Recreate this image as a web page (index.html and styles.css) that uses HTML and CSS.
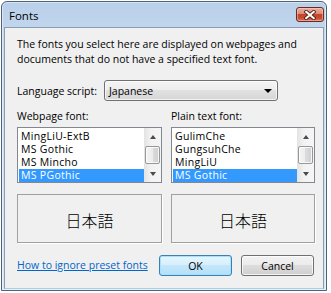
FILE: index.html
```html
<!DOCTYPE html>
<html lang="en">
<head>
<meta charset="utf-8">
<title>Fonts</title>
<link rel="stylesheet" href="styles.css">
</head>
<body>
<div class="window">
  <div class="titlebar">
    <span class="title">Fonts</span>
    <button class="close" aria-label="Close">
      <svg width="12" height="10" viewBox="0 0 12 10">
        <path d="M2.2 1.8 L9.8 8.2 M9.8 1.8 L2.2 8.2" stroke="#5a2018" stroke-width="3.8" stroke-linecap="square"/>
        <path d="M2.2 1.8 L9.8 8.2 M9.8 1.8 L2.2 8.2" stroke="#ffffff" stroke-width="2" stroke-linecap="square"/>
      </svg>
    </button>
  </div>
  <div class="client">
    <p class="intro">The fonts you select here are displayed on webpages and<br>documents that do not have a specified text font.</p>
    <div class="lang-row">
      <span class="lang-label">Language script:</span>
      <div class="combo"><span>Japanese</span><span class="combo-arrow"></span></div>
    </div>
    <div class="columns">
      <div class="col">
        <div class="col-label">Webpage font:</div>
        <div class="listbox">
          <ul class="items">
            <li>MingLiU-ExtB</li>
            <li>MS Gothic</li>
            <li>MS Mincho</li>
            <li class="selected">MS PGothic</li>
          </ul>
          <div class="scrollbar">
            <div class="sb-btn"><span class="arrow-up"></span></div>
            <div class="sb-track"><div class="sb-thumb"></div></div>
            <div class="sb-btn"><span class="arrow-down"></span></div>
          </div>
        </div>
        <div class="preview">日本語</div>
      </div>
      <div class="col">
        <div class="col-label">Plain text font:</div>
        <div class="listbox">
          <ul class="items">
            <li>GulimChe</li>
            <li>GungsuhChe</li>
            <li>MingLiU</li>
            <li class="selected">MS Gothic</li>
          </ul>
          <div class="scrollbar">
            <div class="sb-btn"><span class="arrow-up"></span></div>
            <div class="sb-track"><div class="sb-thumb"></div></div>
            <div class="sb-btn"><span class="arrow-down"></span></div>
          </div>
        </div>
        <div class="preview">日本語</div>
      </div>
    </div>
    <div class="actions">
      <a class="help-link" href="#">How to ignore preset fonts</a>
      <button class="btn btn-default">OK</button>
      <button class="btn btn-cancel">Cancel</button>
    </div>
  </div>
</div>
</body>
</html>
```

FILE: styles.css
```css
* { box-sizing: border-box; }
html, body { margin: 0; padding: 0; }
body {
  width: 331px;
  height: 293px;
  overflow: hidden;
  background: #ffffff;
  font-family: "Open Sans", "Noto Sans", sans-serif;
  font-size: 10.5px;
  color: #000;
}
.window {
  width: 326px;
  height: 290px;
  margin: 1px 0 0 1px;
  border: 1px solid #4e6278;
  border-radius: 6px 6px 0 0;
  background: linear-gradient(#b9d0ea 0%, #c4d8ee 12%, #cfe0f2 60%, #d6e6f5 100%);
  padding: 0 2px 1px 2px;
  display: flex;
  flex-direction: column;
  box-shadow: inset 0 0 0 1px rgba(255,255,255,0.45);
}
.titlebar {
  height: 25px;
  flex: none;
  display: flex;
  justify-content: space-between;
  align-items: flex-start;
}
.title {
  font-size: 11.5px;
  line-height: 16px;
  margin: 6px 0 0 5px;
  color: #000;
}
.close {
  width: 28px;
  height: 15px;
  margin-top: 5px;
  padding: 0;
  border: 1px solid #6a2a20;
  border-radius: 3px;
  background: linear-gradient(#eab0a2 0%, #dc8a76 45%, #c7432c 50%, #c44a30 75%, #d9785a 100%);
  box-shadow: inset 0 0 0 1px rgba(255,220,210,0.45);
  display: flex;
  align-items: center;
  justify-content: center;
}
.close svg { display: block; }
.client {
  flex: 1;
  background: #f0f0f0;
  border: 1px solid #8a9db3;
  border-bottom-color: #a9cfe3;
  padding: 9px 8px 12px 12px;
  display: flex;
  flex-direction: column;
}
.intro {
  margin: 0;
  line-height: 15px;
}
.lang-row {
  margin-top: 13px;
  height: 21px;
  display: flex;
  align-items: center;
}
.lang-label {
  width: 87px;
  flex: none;
}
.combo {
  width: 174px;
  height: 21px;
  border: 1px solid #707070;
  border-radius: 3px;
  background: linear-gradient(#f4f4f4 0%, #ededed 50%, #e1e1e1 50%, #d6d6d6 100%);
  box-shadow: inset 0 0 0 1px rgba(255,255,255,0.7);
  display: flex;
  align-items: center;
  justify-content: space-between;
  padding: 0 5px 0 4px;
}
.combo-arrow {
  width: 0;
  height: 0;
  border-left: 4px solid transparent;
  border-right: 4px solid transparent;
  border-top: 4px solid #000;
}
.columns {
  margin-top: 8px;
  display: grid;
  grid-template-columns: 145px 144px;
  column-gap: 9px;
}
.col-label {
  height: 15px;
  line-height: 15px;
}
.listbox {
  margin-top: 3px;
  height: 56px;
  border: 1px solid #828790;
  background: #fff;
  display: flex;
}
.items {
  list-style: none;
  margin: 0;
  padding: 2px 0 0 0;
  flex: 1;
  overflow: hidden;
  letter-spacing: 0.3px;
}
.items li {
  height: 13px;
  line-height: 13px;
  margin-left: 1px;
  padding-left: 2px;
  white-space: nowrap;
}
.items li.selected {
  background: #3399ff;
  color: #fff;
}
.scrollbar {
  width: 17px;
  flex: none;
  display: flex;
  flex-direction: column;
  background: linear-gradient(to right, #e3e3e3, #f2f2f2 40%, #f5f5f5);
}
.sb-btn {
  height: 17px;
  flex: none;
  display: flex;
  align-items: center;
  justify-content: center;
}
.arrow-up, .arrow-down {
  width: 0;
  height: 0;
  border-left: 3.5px solid transparent;
  border-right: 3.5px solid transparent;
}
.arrow-up { border-bottom: 4px solid #4a4a4a; }
.arrow-down { border-top: 4px solid #4a4a4a; }
.sb-track {
  flex: 1;
  padding: 1px 1px;
  display: flex;
}
.sb-thumb {
  flex: 1;
  border: 1px solid #979797;
  border-radius: 2px;
  background: linear-gradient(to right, #f4f4f4, #ececec 50%, #dcdcdc 50%, #cfcfcf);
  box-shadow: inset 0 0 0 1px rgba(255,255,255,0.8);
}
.preview {
  margin-top: 11px;
  height: 49px;
  border: 1px solid #a0a0a0;
  box-shadow: 1px 1px 0 #ffffff;
  display: flex;
  align-items: center;
  justify-content: center;
  padding-top: 2px;
  font-family: "Noto Sans CJK JP", "Noto Sans CJK SC", sans-serif;
  font-size: 16px;
  font-weight: 300;
}
.actions {
  margin-top: 12px;
  height: 21px;
  display: flex;
  align-items: center;
}
.help-link {
  flex: 1;
  color: #0066cc;
  text-decoration: underline;
  line-height: 15px;
}
.btn {
  width: 73px;
  height: 21px;
  flex: none;
  padding: 0;
  font: inherit;
  color: #000;
  border: 1px solid #707070;
  border-radius: 3px;
  background: linear-gradient(#f2f2f2 0%, #ebebeb 50%, #dddddd 50%, #cfcfcf 100%);
  box-shadow: inset 0 0 0 1px rgba(255,255,255,0.75);
}
.btn-default {
  border-color: #3c7fb1;
  background: linear-gradient(#e7f5fd 0%, #d6effc 50%, #c2e7fb 50%, #b4e0f8 100%);
  box-shadow: inset 0 0 0 1px #a6e1ff;
}
.btn-cancel {
  margin-left: 9px;
  margin-right: 1px;
}
```
